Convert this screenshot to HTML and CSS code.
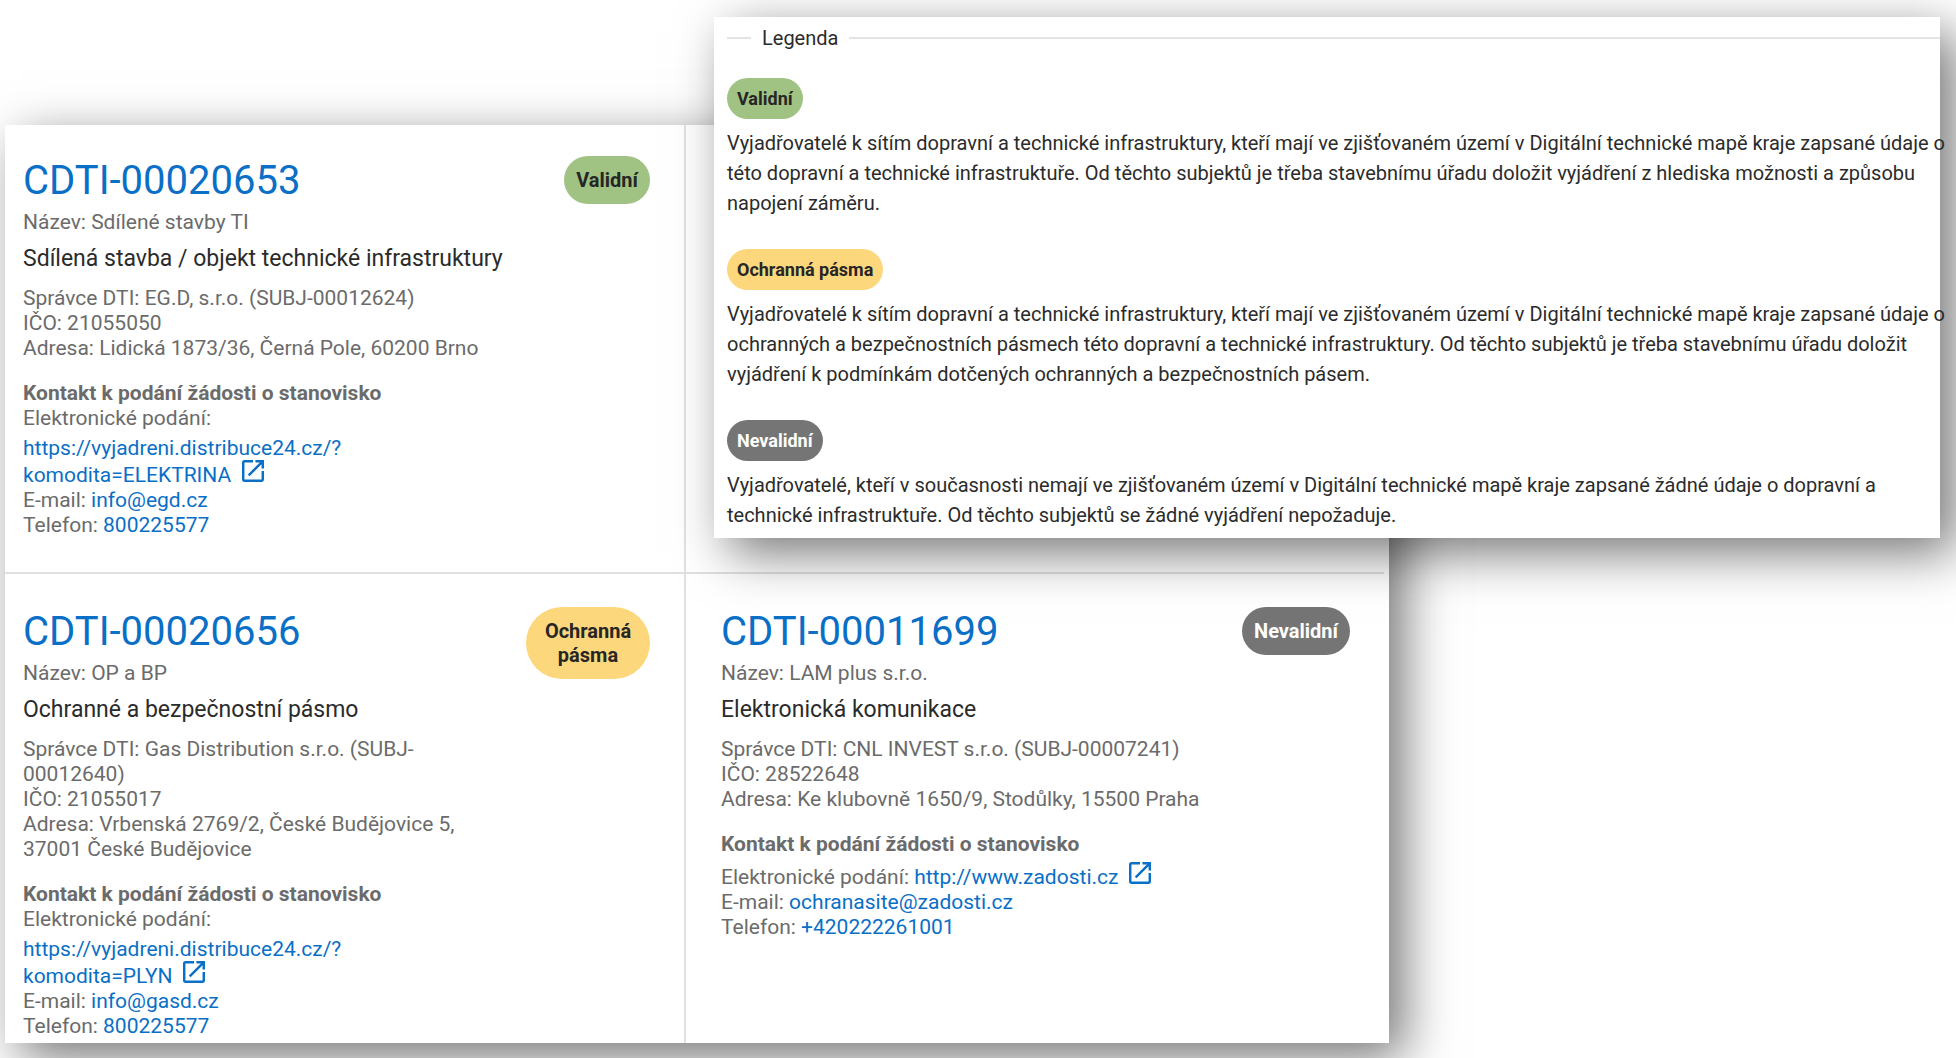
FILE: index.html
```html
<!DOCTYPE html>
<html lang="cs">
<head>
<meta charset="utf-8">
<meta name="viewport" content="width=device-width, initial-scale=1">
<title>Vyjadřovatelé DTI</title>
<link rel="stylesheet" href="styles.css">
</head>
<body>
<svg class="sprite" aria-hidden="true">
  <symbol id="open-in-new" viewBox="3 3 18 18">
    <path d="M19 19H5V5h7V3H5c-1.11 0-2 .9-2 2v14c0 1.1.89 2 2 2h14c1.1 0 2-.9 2-2v-7h-2v7zM14 3v2h3.59l-9.83 9.83 1.41 1.41L19 6.41V10h2V3h-7z"/>
  </symbol>
</svg>
<main class="page">
  <section class="panel results">
    <article class="card card--top">
      <div class="card__body">
        <h2 class="card__title"><a href="#CDTI-00020653">CDTI-00020653</a></h2>
        <p class="card__name">Název: Sdílené stavby TI</p>
        <h3 class="card__type">Sdílená stavba / objekt technické infrastruktury</h3>
        <div class="card__facts">
          <p>Správce DTI: EG.D, s.r.o. (SUBJ-00012624)</p>
          <p>IČO: 21055050</p>
          <p>Adresa: Lidická 1873/36, Černá Pole, 60200 Brno</p>
        </div>
        <div class="card__contact">
          <h4>Kontakt k podání žádosti o stanovisko</h4>
          <p>Elektronické podání: <a class="external" href="https://vyjadreni.distribuce24.cz/?komodita=ELEKTRINA">https://vyjadreni.distribuce24.cz/?<wbr><span class="nowrap">komodita=ELEKTRINA<svg class="icon" aria-hidden="true"><use href="#open-in-new"/></svg></span></a></p>
          <p>E-mail: <a href="mailto:info@egd.cz">info@egd.cz</a></p>
          <p>Telefon: <a href="tel:800225577">800225577</a></p>
        </div>
      </div>
      <span class="badge badge--valid">Validní</span>
    </article>
    <article class="card card--top card--end"></article>
    <article class="card card--bottom">
      <div class="card__body">
        <h2 class="card__title"><a href="#CDTI-00020656">CDTI-00020656</a></h2>
        <p class="card__name">Název: OP a BP</p>
        <h3 class="card__type">Ochranné a bezpečnostní pásmo</h3>
        <div class="card__facts">
          <p>Správce DTI: Gas Distribution s.r.o. (SUBJ-<wbr>00012640)</p>
          <p>IČO: 21055017</p>
          <p>Adresa: Vrbenská 2769/2, České Budějovice 5, 37001 České Budějovice</p>
        </div>
        <div class="card__contact">
          <h4>Kontakt k podání žádosti o stanovisko</h4>
          <p>Elektronické podání: <a class="external" href="https://vyjadreni.distribuce24.cz/?komodita=PLYN">https://vyjadreni.distribuce24.cz/?<wbr><span class="nowrap">komodita=PLYN<svg class="icon" aria-hidden="true"><use href="#open-in-new"/></svg></span></a></p>
          <p>E-mail: <a href="mailto:info@gasd.cz">info@gasd.cz</a></p>
          <p>Telefon: <a href="tel:800225577">800225577</a></p>
        </div>
      </div>
      <span class="badge badge--zone">Ochranná pásma</span>
    </article>
    <article class="card card--bottom card--end">
      <div class="card__body">
        <h2 class="card__title"><a href="#CDTI-00011699">CDTI-00011699</a></h2>
        <p class="card__name">Název: LAM plus s.r.o.</p>
        <h3 class="card__type">Elektronická komunikace</h3>
        <div class="card__facts">
          <p>Správce DTI: CNL INVEST s.r.o. (SUBJ-00007241)</p>
          <p>IČO: 28522648</p>
          <p>Adresa: Ke klubovně 1650/9, Stodůlky, 15500 Praha</p>
        </div>
        <div class="card__contact">
          <h4>Kontakt k podání žádosti o stanovisko</h4>
          <p>Elektronické podání: <a class="external" href="http://www.zadosti.cz"><span class="nowrap">http://www.zadosti.cz<svg class="icon" aria-hidden="true"><use href="#open-in-new"/></svg></span></a></p>
          <p>E-mail: <a href="mailto:ochranasite@zadosti.cz">ochranasite@zadosti.cz</a></p>
          <p>Telefon: <a href="tel:+420222261001">+420222261001</a></p>
        </div>
      </div>
      <span class="badge badge--invalid">Nevalidní</span>
    </article>
  </section>

  <section class="panel key">
    <fieldset class="key__group">
      <legend>Legenda</legend>
      <div class="key__item">
        <span class="badge badge--small badge--valid">Validní</span>
        <p>Vyjadřovatelé k sítím dopravní a technické infrastruktury, kteří mají ve zjišťovaném území v Digitální technické mapě kraje zapsané údaje o této dopravní a technické infrastruktuře. Od těchto subjektů je třeba stavebnímu úřadu doložit vyjádření z hlediska možnosti a způsobu napojení záměru.</p>
      </div>
      <div class="key__item">
        <span class="badge badge--small badge--zone">Ochranná pásma</span>
        <p>Vyjadřovatelé k sítím dopravní a technické infrastruktury, kteří mají ve zjišťovaném území v Digitální technické mapě kraje zapsané údaje o ochranných a bezpečnostních pásmech této dopravní a technické infrastruktury. Od těchto subjektů je třeba stavebnímu úřadu doložit vyjádření k podmínkám dotčených ochranných a bezpečnostních pásem.</p>
      </div>
      <div class="key__item">
        <span class="badge badge--small badge--invalid">Nevalidní</span>
        <p>Vyjadřovatelé, kteří v současnosti nemají ve zjišťovaném území v Digitální technické mapě kraje zapsané žádné údaje o dopravní a technické infrastruktuře. Od těchto subjektů se žádné vyjádření nepožaduje.</p>
      </div>
    </fieldset>
  </section>
</main>
</body>
</html>
```
FILE: styles.css
```css
* {
  box-sizing: border-box;
}

body {
  margin: 0;
  background: #fff;
  color: #2b2b2b;
  font-family: Roboto, "Liberation Sans", sans-serif;
  font-size: 20px;
  line-height: 25px;
}

h2, h3, h4, p {
  margin: 0;
  font-size: inherit;
  font-weight: 400;
}

a {
  color: #0a6fc6;
  text-decoration: none;
}

.sprite {
  display: none;
}

/* The key panel overlaps the results panel in the middle column. */
.page {
  display: grid;
  grid-template-columns: 709fr 675fr 551fr;
  align-items: start;
  padding: 0 16px 15px 5px;
}

.panel {
  grid-row: 1;
  background: #fff;
  box-shadow: 15px 15px 48px rgba(0, 0, 0, 0.54);
}

/* Results */
.results {
  grid-column: 1 / 3;
  display: grid;
  grid-template-columns: 681fr 698fr;
  margin-top: 125px;
  padding-right: 5px;
}

.card {
  display: flex;
  justify-content: space-between;
  align-items: flex-start;
  padding: 33px 34px 4px 18px;
  border-right: 2px solid #e0e0e0;
}

.card--top {
  padding-top: 31px;
  padding-bottom: 34px;
  border-bottom: 2px solid #e0e0e0;
}

.card--end {
  padding-left: 35px;
  border-right: 0;
}

.card__body {
  width: 77%;
  color: #6b6b6b;
  font-size: 21px;
}

.card__title {
  font-size: 40px;
  line-height: 50px;
}

.card__name {
  margin-top: 4px;
}

.card__type {
  margin: 10px 0 13px;
  color: #2b2b2b;
  font-size: 23px;
  line-height: 28px;
  white-space: nowrap;
}

.card__contact {
  margin-top: 20px;
}

.card__contact h4 {
  font-weight: 700;
}

.external {
  display: inline-block;
  padding-top: 5px;
  line-height: 24px;
}

.nowrap {
  white-space: nowrap;
}

.icon {
  width: 22px;
  height: 22px;
  margin-left: 11px;
  fill: currentColor;
}

/* Badges */
.badge {
  max-width: 124px;
  padding: 12px;
  border-radius: 36px;
  color: #262626;
  font-weight: 700;
  line-height: 24px;
  text-align: center;
}

.badge--small {
  max-width: none;
  padding: 8px 10px;
  font-size: 18px;
  line-height: 25px;
}

.badge--valid {
  background: #a0c384;
}

.badge--zone {
  background: #fdd77c;
}

.badge--invalid {
  background: #757575;
  color: #fff;
}

/* Key */
.key {
  grid-column: 2 / 4;
  margin-top: 17px;
  padding: 9px 0 8px 13px;
}

.key__group {
  min-width: 0;
  margin: 0;
  padding: 28px 0 0;
  border: 0;
  border-top: 2px solid #e4e4e4;
}

.key__group legend {
  margin-left: 24px;
  padding: 0 11px;
  line-height: 24px;
}

.key__item {
  display: flex;
  flex-direction: column;
  align-items: flex-start;
  gap: 9px;
  line-height: 30px;
}

.key__item p {
  margin-right: -8px;
}

.key__item + .key__item {
  margin-top: 31px;
}
```
